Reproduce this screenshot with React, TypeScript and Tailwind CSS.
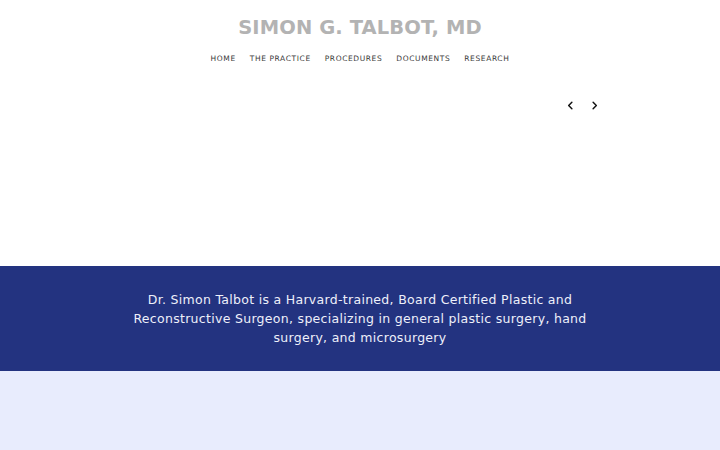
export default function App() {
  const links = ['HOME', 'THE PRACTICE', 'PROCEDURES', 'DOCUMENTS', 'RESEARCH'];

  return (
    <div className="min-h-[450px] w-full bg-white font-['DejaVu_Sans',sans-serif]">
      {/* Header */}
      <header className="flex flex-col items-center pt-[15px]">
        <h1 className="text-[19.5px] font-bold leading-[26px] tracking-[0.1px] text-[#b3b3b3]">
          SIMON G. TALBOT, MD
        </h1>
        <nav className="mt-[12px] flex gap-[14px] text-[7.5px] tracking-[0.6px] text-[#3a3a3a]">
          {links.map((l) => (
            <span key={l}>{l}</span>
          ))}
        </nav>
      </header>

      {/* Slider */}
      <div className="flex h-[202px] justify-end pr-[120px] pt-[36px]">
        <div className="flex gap-[13px]">
          <svg width="11" height="11" viewBox="0 0 24 24" fill="none" stroke="#111" strokeWidth="3.2" strokeLinecap="round" strokeLinejoin="round">
            <path d="M15 5 8 12l7 7" />
          </svg>
          <svg width="11" height="11" viewBox="0 0 24 24" fill="none" stroke="#111" strokeWidth="3.2" strokeLinecap="round" strokeLinejoin="round">
            <path d="M9 5l7 7-7 7" />
          </svg>
        </div>
      </div>

      {/* Intro band */}
      <section className="flex h-[105px] items-center justify-center bg-[#233380] px-[130px]">
        <p className="text-center text-[12.5px] leading-[19px] tracking-[0.3px] text-[#eef0fa]">
          Dr. Simon Talbot is a Harvard-trained, Board Certified Plastic and Reconstructive Surgeon, specializing in general plastic surgery, hand surgery, and microsurgery
        </p>
      </section>

      <div className="h-[79px] bg-[#e8ecfd]" />
    </div>
  );
}
